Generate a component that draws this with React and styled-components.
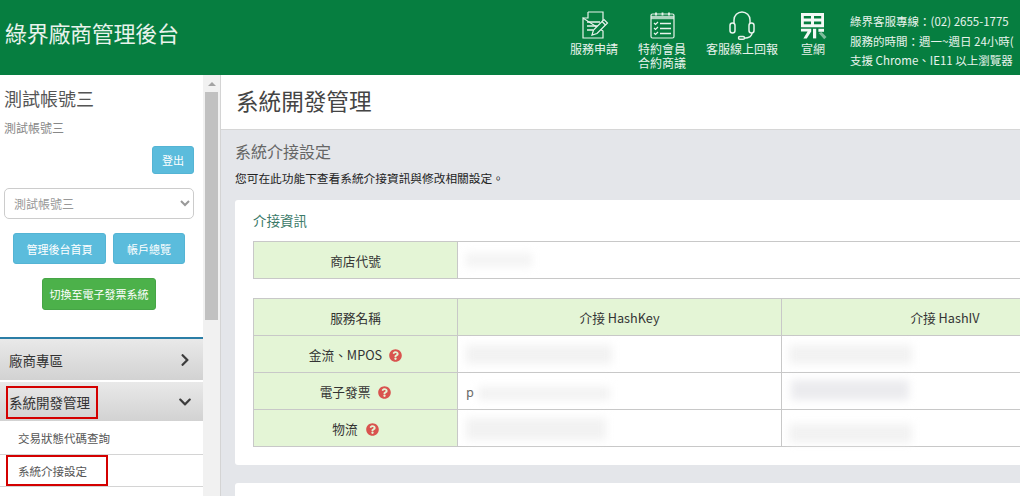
import React from "react";
import styled, { createGlobalStyle } from "styled-components";
import { FaChevronDown, FaChevronRight, FaQuestionCircle } from "react-icons/fa";

const GlobalStyle = createGlobalStyle`
  html, body {
    margin: 0;
    height: 100%;
    overflow: hidden;
    background: #fff;
  }
  body {
    font-family: "Noto Sans CJK TC", "Liberation Sans", sans-serif;
    color: #333;
  }
  * { box-sizing: border-box; }
`;

const Page = styled.div`
  width: 1020px;
  height: 496px;
  display: flex;
  flex-direction: column;
  overflow: hidden;
`;

const Header = styled.header`
  height: 75px;
  flex: none;
  display: flex;
  background: #067e40;
  color: #e8f3ec;
`;

const Brand = styled.div`
  flex: 0 0 570px;
  padding: 17px 0 0 5px;
  font-size: 22px;
  line-height: 30px;
  letter-spacing: -0.3px;
`;

const Nav = styled.nav`
  display: flex;
  gap: 20px;
  flex: none;
`;

const NavItem = styled.a`
  display: flex;
  flex-direction: column;
  align-items: center;
  padding-top: 10px;
  font-size: 12px;
  line-height: 14px;
  text-align: center;
  color: #e8f3ec;

  svg {
    display: block;
    width: 30px;
    height: 30px;
    margin-bottom: 2px;
  }
`;

const Info = styled.div`
  flex: none;
  margin-left: 22px;
  padding-top: 12px;
  font-size: 11.5px;
  line-height: 19.5px;
  white-space: nowrap;
`;

const Body = styled.div`
  flex: 1;
  display: flex;
  min-height: 0;
`;

const Sidebar = styled.aside`
  flex: 0 0 221px;
  display: flex;
  border-right: 1px solid #d4d4d4;
  background: #fff;
`;

const SideContent = styled.div`
  width: 203px;
  flex: none;
`;

const Account = styled.div`
  padding: 10px 9px 0 4px;
  height: 262px;
`;

const AccountName = styled.div`
  font-size: 18px;
  line-height: 26px;
  color: #555;
`;

const AccountSub = styled.div`
  margin-top: 8px;
  font-size: 12px;
  line-height: 18px;
  color: #888;
`;

const Button = styled.div`
  display: flex;
  align-items: center;
  justify-content: center;
  width: ${(props) => props.$w}px;
  height: ${(props) => props.$h}px;
  border-radius: 3px;
  background: ${(props) => (props.$green ? "#4cb14a" : "#5bbcdc")};
  border: 1px solid ${(props) => (props.$green ? "#46a546" : "#54b4d4")};
  color: #fff;
  font-size: 11px;
`;

const LogoutRow = styled.div`
  display: flex;
  justify-content: flex-end;
  margin-top: 9px;
`;

const AccountSelect = styled.select`
  display: block;
  width: 190px;
  height: 31px;
  margin-top: 14px;
  padding: 0 4px 0 5px;
  border: 1px solid #ccc;
  border-radius: 5px;
  background: #fff;
  color: #999;
  font-family: inherit;
  font-size: 12px;
`;

const ButtonRow = styled.div`
  display: flex;
  justify-content: center;
  gap: 7px;
  margin-top: ${(props) => props.$top}px;
`;

const Menu = styled.div`
  border-top: 2px solid #2b7ea6;
`;

const MenuHead = styled.div`
  position: relative;
  display: flex;
  align-items: center;
  justify-content: space-between;
  height: ${(props) => props.$h}px;
  margin-bottom: ${(props) => props.$gap || 0}px;
  padding: 0 11px 0 9px;
  background: linear-gradient(#e9e9e9, #d2d2d2);
  font-size: 13.5px;
  color: #333;

  svg {
    width: 14px;
    height: 14px;
    color: #3c3c3c;
  }
`;

const SubItem = styled.div`
  position: relative;
  display: flex;
  align-items: center;
  height: ${(props) => props.$h}px;
  padding: 1px 0 0 18px;
  border-bottom: 1px solid #d4d4d4;
  font-size: 11.5px;
  color: #555;
`;

const Highlight = styled.span`
  position: absolute;
  left: 6px;
  top: ${(props) => props.$top}px;
  width: ${(props) => props.$w}px;
  height: ${(props) => props.$h}px;
  border: 2px solid #d40000;
`;

const Scrollbar = styled.div`
  width: 17px;
  flex: none;
  display: flex;
  flex-direction: column;
  align-items: center;
  background: #f1f1f1;
`;

const ScrollArrow = styled.span`
  margin-top: 7px;
  width: 0;
  height: 0;
  border-left: 4px solid transparent;
  border-right: 4px solid transparent;
  border-bottom: 4px solid #a3a3a3;
`;

const ScrollThumb = styled.div`
  width: 13px;
  height: 228px;
  margin-top: 6px;
  background: #c1c1c1;
`;

const Main = styled.main`
  flex: 1;
  min-width: 0;
  overflow: hidden;
  background: #e4e6ea;
`;

const TitleBar = styled.div`
  height: 55px;
  padding: 10px 0 0 15px;
  background: #fff;
  border-bottom: 1px solid #d6d6d6;
  font-size: 22.6px;
  line-height: 32px;
  color: #444;
`;

const Content = styled.div`
  width: 900px;
  padding: 10px 0 0 14px;
`;

const SectionTitle = styled.div`
  font-size: 16px;
  line-height: 22px;
  color: #666;
`;

const Description = styled.div`
  margin-top: 7px;
  font-size: 11.7px;
  line-height: 18px;
  color: #222;
`;

const Card = styled.section`
  margin-top: ${(props) => props.$top}px;
  min-height: ${(props) => props.$h}px;
  padding: 11px 18px 0;
  background: #fff;
  border-radius: 3px;
`;

const CardTitle = styled.div`
  font-size: 13.5px;
  line-height: 18px;
  color: #3b7a69;
`;

const Table = styled.table`
  width: 855px;
  margin-top: ${(props) => props.$top}px;
  border-collapse: collapse;
  table-layout: fixed;
  font-size: 12.7px;
  color: #333;

  th, td {
    height: 37px;
    padding: 0 8px;
    border: 1px solid #c8c8c8;
    font-weight: 400;
  }
`;

const LabelCell = styled.td`
  width: 204px;
  background: #e4f5d6;
  text-align: center;
`;

const HeadCell = styled.th`
  width: ${(props) => props.$w}px;
  background: #e4f5d6;
`;

const Help = styled(FaQuestionCircle)`
  width: 13px;
  height: 13px;
  margin-left: ${(props) => props.$gap}px;
  color: #d9534f;
  vertical-align: -2px;
`;

const Masked = styled.div`
  display: inline-block;
  vertical-align: middle;
  width: ${(props) => props.$w}px;
  height: ${(props) => props.$h}px;
  margin-left: ${(props) => props.$x || 0}px;
  transform: translateY(${(props) => props.$y || 0}px);
  background: ${(props) => props.$tone || "#f2f2f2"};
  filter: blur(4px);
`;

const Letter = styled.span`
  color: #666;
`;

const DocIcon = () => (
  <svg viewBox="0 0 30 30" fill="none" stroke="currentColor" strokeWidth="1.2">
    <path d="M9 2h15v9M24 21v7H4V8z" />
    <path d="M4 8h5V2" />
    <path d="M8 12h13M8 16h11M8 20h6" strokeWidth="1.4" />
    <path d="M13 25l1.5-5L25 9.5l3.5 3.5L18 23.5z" fill="#067e40" />
    <path d="M23 11.5l3.5 3.5" />
  </svg>
);

const CalendarIcon = () => (
  <svg viewBox="0 0 30 30" fill="none" stroke="currentColor" strokeWidth="1.2">
    <rect x="4" y="4" width="23" height="24" rx="1.5" />
    <path d="M4 7.5h23" strokeWidth="3.4" opacity="0.75" />
    <path d="M9 2.5v3M15.5 2.5v3M22 2.5v3" strokeWidth="1.8" />
    <path d="M7 13l1.5 1.5L11 12M7 18l1.5 1.5L11 17M7 23l1.5 1.5L11 22" />
    <path d="M13 13.5h11M13 18.5h11M13 23.5h11" strokeWidth="1.5" />
  </svg>
);

const HeadsetIcon = () => (
  <svg viewBox="0 0 30 30" fill="none" stroke="currentColor" strokeWidth="1.5">
    <path d="M7 14v-4a8 8 0 0 1 16 0v4" />
    <rect x="3" y="13" width="5" height="10" rx="2.5" />
    <rect x="22" y="13" width="5" height="10" rx="2.5" />
    <path d="M25 23c0 3.5-4 5-8 5.2" />
    <rect x="11.5" y="26.6" width="6" height="2.6" rx="1.3" />
  </svg>
);

const LogoIcon = () => (
  <svg viewBox="0 0 30 30" fill="#f4f9f6">
    <path d="M3 3h23v14.2H3zM5.8 6v2.6h7.2V6zM16 6v2.6h7.2V6zM5.8 11.6v2.6h7.2v-2.6zM16 11.6v2.6h7.2v-2.6z" fillRule="evenodd" />
    <path d="M3 18.8h10.2v2.8L8.8 28.4H5.4l4.2-6.8H3z" />
    <path d="M15 18.8h3.2v9.6H15z" />
    <path d="M20.4 18.8h5.6v3h-5.6z" />
    <path d="M20.6 23l3-.9 4.9 5-2.3 2.1z" opacity="0.5" />
  </svg>
);

export default function App() {
  return (
    <>
      <GlobalStyle />
      <Page>
        <Header>
          <Brand>綠界廠商管理後台</Brand>
          <Nav>
            <NavItem><DocIcon />服務申請</NavItem>
            <NavItem><CalendarIcon />特約會員<br />合約商議</NavItem>
            <NavItem><HeadsetIcon />客服線上回報</NavItem>
            <NavItem><LogoIcon />宣網</NavItem>
          </Nav>
          <Info>
            綠界客服專線：(02) 2655-1775<br />
            服務的時間：週一~週日 24小時(<br />
            支援 Chrome、IE11 以上瀏覽器
          </Info>
        </Header>
        <Body>
          <Sidebar>
            <SideContent>
              <Account>
                <AccountName>測試帳號三</AccountName>
                <AccountSub>測試帳號三</AccountSub>
                <LogoutRow><Button $w={42} $h={28}>登出</Button></LogoutRow>
                <AccountSelect defaultValue="a">
                  <option value="a">測試帳號三</option>
                </AccountSelect>
                <ButtonRow $top={14}>
                  <Button $w={93} $h={31}>管理後台首頁</Button>
                  <Button $w={72} $h={31}>帳戶總覽</Button>
                </ButtonRow>
                <ButtonRow $top={14}>
                  <Button $green $w={114} $h={32}>切換至電子發票系統</Button>
                </ButtonRow>
              </Account>
              <Menu>
                <MenuHead $h={41} $gap={2}>廠商專區<FaChevronRight /></MenuHead>
                <MenuHead $h={39}>
                  系統開發管理<FaChevronDown />
                  <Highlight $top={4} $w={92} $h={33} />
                </MenuHead>
                <SubItem $h={34}>交易狀態代碼查詢</SubItem>
                <SubItem $h={32}>
                  系統介接設定
                  <Highlight $top={0} $w={102} $h={31} />
                </SubItem>
              </Menu>
            </SideContent>
            <Scrollbar>
              <ScrollArrow />
              <ScrollThumb />
            </Scrollbar>
          </Sidebar>
          <Main>
            <TitleBar>系統開發管理</TitleBar>
            <Content>
              <SectionTitle>系統介接設定</SectionTitle>
              <Description>您可在此功能下查看系統介接資訊與修改相關設定。</Description>
              <Card $top={13} $h={265}>
                <CardTitle>介接資訊</CardTitle>
                <Table $top={12}>
                  <tbody>
                    <tr>
                      <LabelCell>商店代號</LabelCell>
                      <td><Masked $w={66} $h={14} $y={-2} $tone="#f4f4f4" /></td>
                    </tr>
                  </tbody>
                </Table>
                <Table $top={19}>
                  <thead>
                    <tr>
                      <HeadCell $w={204}>服務名稱</HeadCell>
                      <HeadCell $w={324}>介接 HashKey</HeadCell>
                      <HeadCell $w={327}>介接 HashIV</HeadCell>
                    </tr>
                  </thead>
                  <tbody>
                    <tr>
                      <LabelCell>金流、MPOS<Help $gap={7} /></LabelCell>
                      <td><Masked $w={146} $h={19} $y={-1} /></td>
                      <td><Masked $w={123} $h={19} $x={-1} $y={-1} /></td>
                    </tr>
                    <tr>
                      <LabelCell>電子發票<Help $gap={8} /></LabelCell>
                      <td>
                        <Letter>p</Letter>
                        <Masked $w={132} $h={13} $x={4} />
                      </td>
                      <td><Masked $w={118} $h={20} $x={1} $y={-2} $tone="#ebebee" /></td>
                    </tr>
                    <tr>
                      <LabelCell>物流<Help $gap={8} /></LabelCell>
                      <td><Masked $w={140} $h={22} $y={1} /></td>
                      <td><Masked $w={123} $h={19} $x={-1} $y={4} /></td>
                    </tr>
                  </tbody>
                </Table>
              </Card>
              <Card $top={18} $h={40} />
            </Content>
          </Main>
        </Body>
      </Page>
    </>
  );
}
